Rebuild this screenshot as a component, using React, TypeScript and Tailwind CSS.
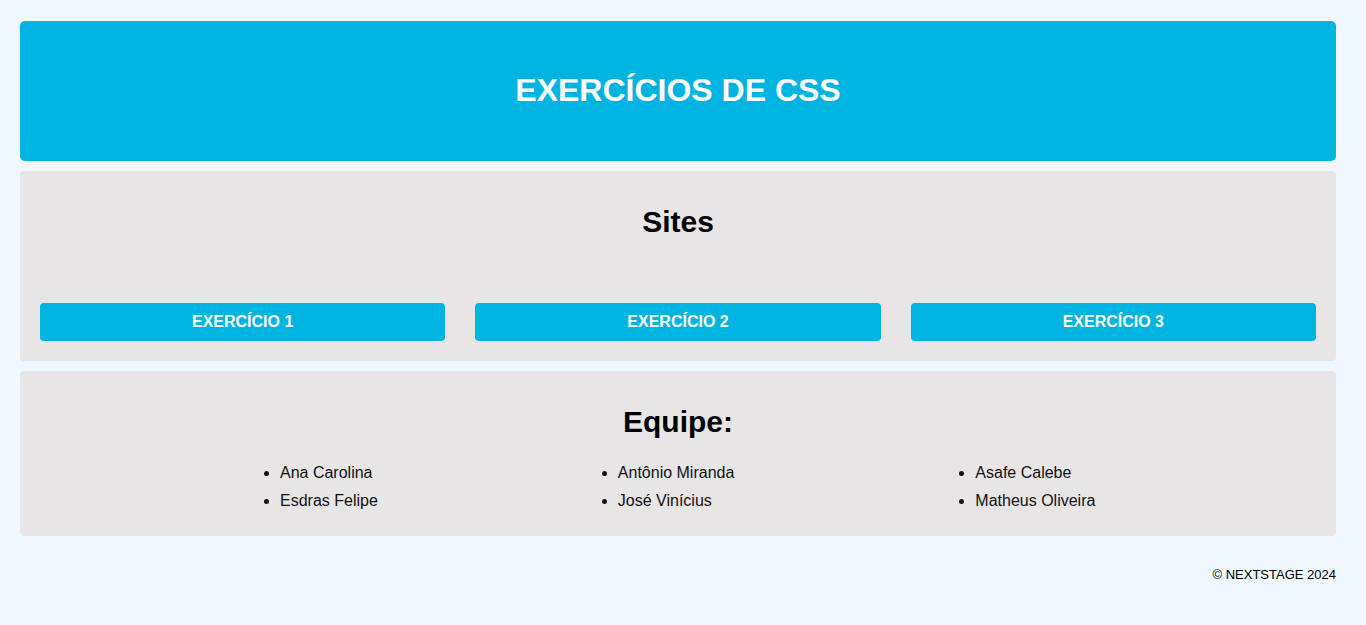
const sites = ['EXERCÍCIO 1', 'EXERCÍCIO 2', 'EXERCÍCIO 3'];

const team = [
  ['Ana Carolina', 'Esdras Felipe'],
  ['Antônio Miranda', 'José Vinícius'],
  ['Asafe Calebe', 'Matheus Oliveira'],
];

export default function App() {
  return (
    <div
      className="min-h-[625px] bg-[#f0f8ff] pl-5 pr-[30px] pt-[21px] text-black"
      style={{ fontFamily: '"Liberation Sans", Arial, sans-serif' }}
    >
      <div className="flex flex-col gap-[10px]">
        <header className="flex h-[140px] items-center justify-center rounded-[5px] bg-[#00b4e1] pb-[2px]">
          <h1 className="text-[32px] font-bold leading-[37px] text-white">EXERCÍCIOS DE CSS</h1>
        </header>

        <section className="h-[190px] rounded-[4px] bg-[#e7e5e6] px-5 pt-[34px]">
          <h2 className="text-center text-[30px] font-bold leading-[34px]">Sites</h2>
          <div className="mt-[64px] flex gap-[30px]">
            {sites.map((s) => (
              <a
                key={s}
                href="#"
                className="flex h-[38px] flex-1 items-center justify-center rounded-[4px] bg-[#00b4e1] text-base font-bold text-white"
              >
                {s}
              </a>
            ))}
          </div>
        </section>

        <section className="h-[165px] rounded-[4px] bg-[#e7e5e6] px-5 pt-[34px]">
          <h2 className="text-center text-[30px] font-bold leading-[34px]">Equipe:</h2>
          <div className="mt-[20px] flex pl-[200px]">
            {team.map((col, i) => (
              <ul
                key={i}
                className={
                  i === 0
                    ? 'list-disc pl-10 text-base leading-[28px] text-[#111]'
                    : i === 1
                      ? 'ml-[200px] list-disc pl-10 text-base leading-[28px] text-[#111]'
                      : 'ml-[201px] list-disc pl-10 text-base leading-[28px] text-[#111]'
                }
              >
                {col.map((name) => (
                  <li key={name}>{name}</li>
                ))}
              </ul>
            ))}
          </div>
        </section>
      </div>

      <footer className="mt-[31px] text-right text-[13px] leading-[15px]">© NEXTSTAGE 2024</footer>
    </div>
  );
}
